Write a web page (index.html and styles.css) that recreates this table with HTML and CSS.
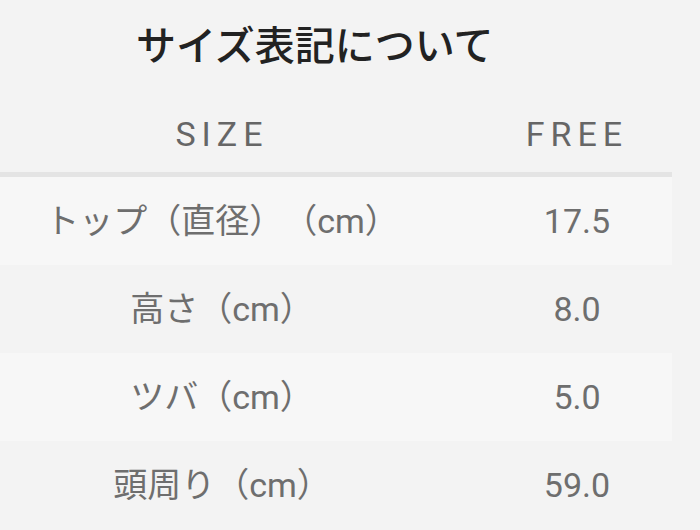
FILE: index.html
```html
<!DOCTYPE html>
<html lang="ja">
<head>
<meta charset="utf-8">
<title>サイズ表記について</title>
<link rel="stylesheet" href="styles.css">
</head>
<body>
<div class="page">
  <h1 class="title">サイズ表記について</h1>
  <div class="table">
    <div class="row head">
      <div class="cell label">SIZE</div>
      <div class="cell value">FREE</div>
    </div>
    <div class="row odd">
      <div class="cell label">トップ（直径）（cm）</div>
      <div class="cell value">17.5</div>
    </div>
    <div class="row">
      <div class="cell label">高さ（cm）</div>
      <div class="cell value">8.0</div>
    </div>
    <div class="row odd">
      <div class="cell label">ツバ（cm）</div>
      <div class="cell value">5.0</div>
    </div>
    <div class="row">
      <div class="cell label">頭周り（cm）</div>
      <div class="cell value">59.0</div>
    </div>
  </div>
</div>
</body>
</html>
```
FILE: styles.css
```css
html, body {
  margin: 0;
  padding: 0;
  background: #f3f3f3;
}
body {
  font-family: Roboto, "Noto Sans CJK JP", sans-serif;
  width: 700px;
  height: 530px;
  overflow: hidden;
  text-spacing-trim: space-all;
}
.page {
  display: flex;
  flex-direction: column;
}
.title {
  margin: 0 0 28px 0;
  padding: 18px 0 0 136px;
  font-family: "Noto Sans CJK JP", sans-serif;
  font-size: 40px;
  line-height: 50px;
  font-weight: 500;
  color: #222222;
}
.table {
  width: 672px;
  display: flex;
  flex-direction: column;
}
.row {
  display: grid;
  grid-template-columns: 444px 1fr;
  align-items: center;
  height: 88px;
  color: #6e6e6e;
  font-size: 34px;
}
.row.odd {
  background: #f7f7f7;
}
.row.head {
  height: 76px;
  border-bottom: 5px solid #e4e4e4;
  color: #666666;
  letter-spacing: 6px;
}
.cell {
  text-align: center;
  line-height: 40px;
  white-space: nowrap;
}
.value {
  padding-left: 38px;
}
```
